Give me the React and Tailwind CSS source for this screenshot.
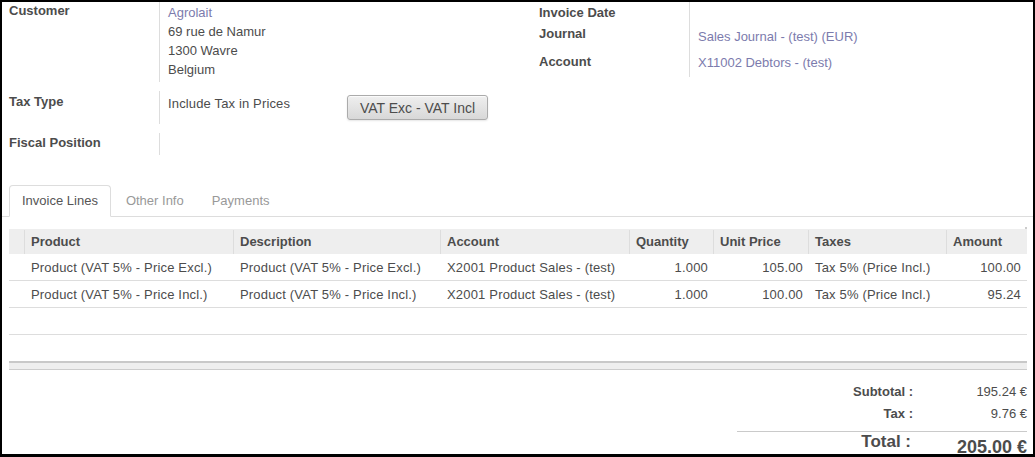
import React from "react";

const lines = [
  {
    product: "Product (VAT 5% - Price Excl.)",
    description: "Product (VAT 5% - Price Excl.)",
    account: "X2001 Product Sales - (test)",
    quantity: "1.000",
    price: "105.00",
    taxes: "Tax 5% (Price Incl.)",
    amount: "100.00",
  },
  {
    product: "Product (VAT 5% - Price Incl.)",
    description: "Product (VAT 5% - Price Incl.)",
    account: "X2001 Product Sales - (test)",
    quantity: "1.000",
    price: "100.00",
    taxes: "Tax 5% (Price Incl.)",
    amount: "95.24",
  },
];

const cols = "grid grid-cols-[15px_209px_207px_189px_84px_95px_138px_81px]";

function Label({ children, className = "" }) {
  return (
    <div className={`w-[157px] shrink-0 pl-[7px] font-bold ${className}`}>
      {children}
    </div>
  );
}

export default function App() {
  return (
    <div
      className="h-[457px] w-[1035px] overflow-hidden border-t-2 border-l-2 border-r-2 border-b-[3px] border-black bg-white text-[13px] text-[#4c4c4c]"
      style={{ fontFamily: '"Liberation Sans", Arial, sans-serif' }}
    >
      {/* header form */}
      <div className="flex">
        <div className="w-[530px] shrink-0">
          <div className="flex h-[80px]">
            <Label className="leading-[18px]">Customer</Label>
            <div className="border-l border-[#ddd] pl-[8px] pt-[1px] leading-[19px]">
              <div className="text-[#7c7bad]">Agrolait</div>
              <div>69 rue de Namur</div>
              <div>1300 Wavre</div>
              <div>Belgium</div>
            </div>
          </div>
          <div className="mt-[9px] flex h-[33px]">
            <Label className="pt-[2px] leading-[18px]">Tax Type</Label>
            <div className="flex items-start border-l border-[#ddd] pl-[8px]">
              <span className="w-[179px] pt-[4px] leading-[18px] tracking-[0.15px]">
                Include Tax in Prices
              </span>
              <button className="mt-[4px] h-[25px] w-[141px] rounded-[3px] border border-[#ababab] bg-gradient-to-b from-[#efefef] to-[#d8d8d8] pt-[1px] text-[14px] text-[#4c4c4c] shadow-[0_1px_2px_rgba(0,0,0,0.1),inset_0_1px_1px_rgba(255,255,255,0.8)]">
                VAT Exc - VAT Incl
              </button>
            </div>
          </div>
          <div className="mt-[9px] flex h-[22px]">
            <Label className="leading-[20px]">Fiscal Position</Label>
            <div className="border-l border-[#ddd]" />
          </div>
        </div>

        <div className="flex-1">
          <div className="flex h-[22px] items-center">
            <Label className="leading-[20px]">Invoice Date</Label>
            <div className="h-full border-l border-[#ddd]" />
          </div>
          <div className="flex h-[27px]">
            <Label className="pt-[1px] leading-[18px]">Journal</Label>
            <div className="border-l border-[#ddd] pl-[8px] pt-[4px] leading-[18px] text-[#7c7bad]">
              Sales Journal - (test) (EUR)
            </div>
          </div>
          <div className="flex h-[26px]">
            <Label className="pt-[2px] leading-[18px]">Account</Label>
            <div className="border-l border-[#ddd] pl-[8px] pt-[3px] leading-[18px] text-[#7c7bad]">
              X11002 Debtors - (test)
            </div>
          </div>
        </div>
      </div>

      {/* tabs */}
      <div className="mt-[30px] flex h-[32px] border-b border-[#ddd] pl-[7px]">
        <div className="-mb-px mr-[2px] h-[32px] rounded-t-[4px] border border-[#ddd] border-b-transparent bg-white px-[12px] leading-[30px] text-[#555]">
          Invoice Lines
        </div>
        <div className="-mb-px mr-[2px] h-[32px] border border-transparent px-[12px] leading-[30px] text-[#999]">
          Other Info
        </div>
        <div className="-mb-px h-[32px] border border-transparent px-[12px] leading-[30px] text-[#999]">
          Payments
        </div>
      </div>

      {/* invoice lines */}
      <div className="relative ml-[7px] mt-[12px] w-[1018px]">
        <div className="absolute -top-[2px] right-0 h-[2px] w-[2px] bg-[#ccc]" />
        <div className={`${cols} h-[25px] bg-[#eee] pt-[1px] font-bold leading-[24px]`}>
          <div />
          <div className="border-l border-[#ddd] pl-[6px]">Product</div>
          <div className="border-l border-[#ddd] pl-[6px]">Description</div>
          <div className="border-l border-[#ddd] pl-[6px]">Account</div>
          <div className="border-l border-[#ddd] pl-[6px]">Quantity</div>
          <div className="border-l border-[#ddd] pl-[6px]">Unit Price</div>
          <div className="border-l border-[#ddd] pl-[6px]">Taxes</div>
          <div className="border-l border-[#ddd] pl-[6px]">Amount</div>
        </div>
        {lines.map((l, i) => (
          <div
            key={i}
            className={`${cols} h-[27px] items-center border-b border-[#ddd] pt-[1px] whitespace-nowrap tracking-[0.18px]`}
          >
            <div />
            <div className="pl-[7px]">{l.product}</div>
            <div className="pl-[7px]">{l.description}</div>
            <div className="pl-[7px]">{l.account}</div>
            <div className="pr-[5px] text-right">{l.quantity}</div>
            <div className="pr-[5px] text-right">{l.price}</div>
            <div className="pl-[7px]">{l.taxes}</div>
            <div className="pr-[6px] text-right">{l.amount}</div>
          </div>
        ))}
        <div className="h-[27px] border-b border-[#ddd]" />
        <div className="mt-[26px] h-[9px] border-t-2 border-b border-t-[#c8c8c8] border-b-[#ccc] bg-[#eee]" />
      </div>

      {/* totals */}
      <div className="mt-[11px] flex justify-end pr-[6px]">
        <div className="w-[290px]">
          <div className="flex h-[22px] items-center">
            <div className="w-[182px] pr-[6px] text-right font-bold">Subtotal :</div>
            <div className="flex-1 text-right">195.24 €</div>
          </div>
          <div className="flex h-[22px] items-center">
            <div className="w-[182px] pr-[6px] text-right font-bold">Tax :</div>
            <div className="flex-1 text-right">9.76 €</div>
          </div>
          <div className="mt-[6px] flex border-t border-[#cacaca] font-bold">
            <div className="w-[182px] pr-[8px] pt-[1px] text-right text-[17px] leading-[17px]">
              Total :
            </div>
            <div className="flex-1 pt-[6px] text-right text-[18px] leading-[18px]">
              205.00 €
            </div>
          </div>
        </div>
      </div>
    </div>
  );
}
